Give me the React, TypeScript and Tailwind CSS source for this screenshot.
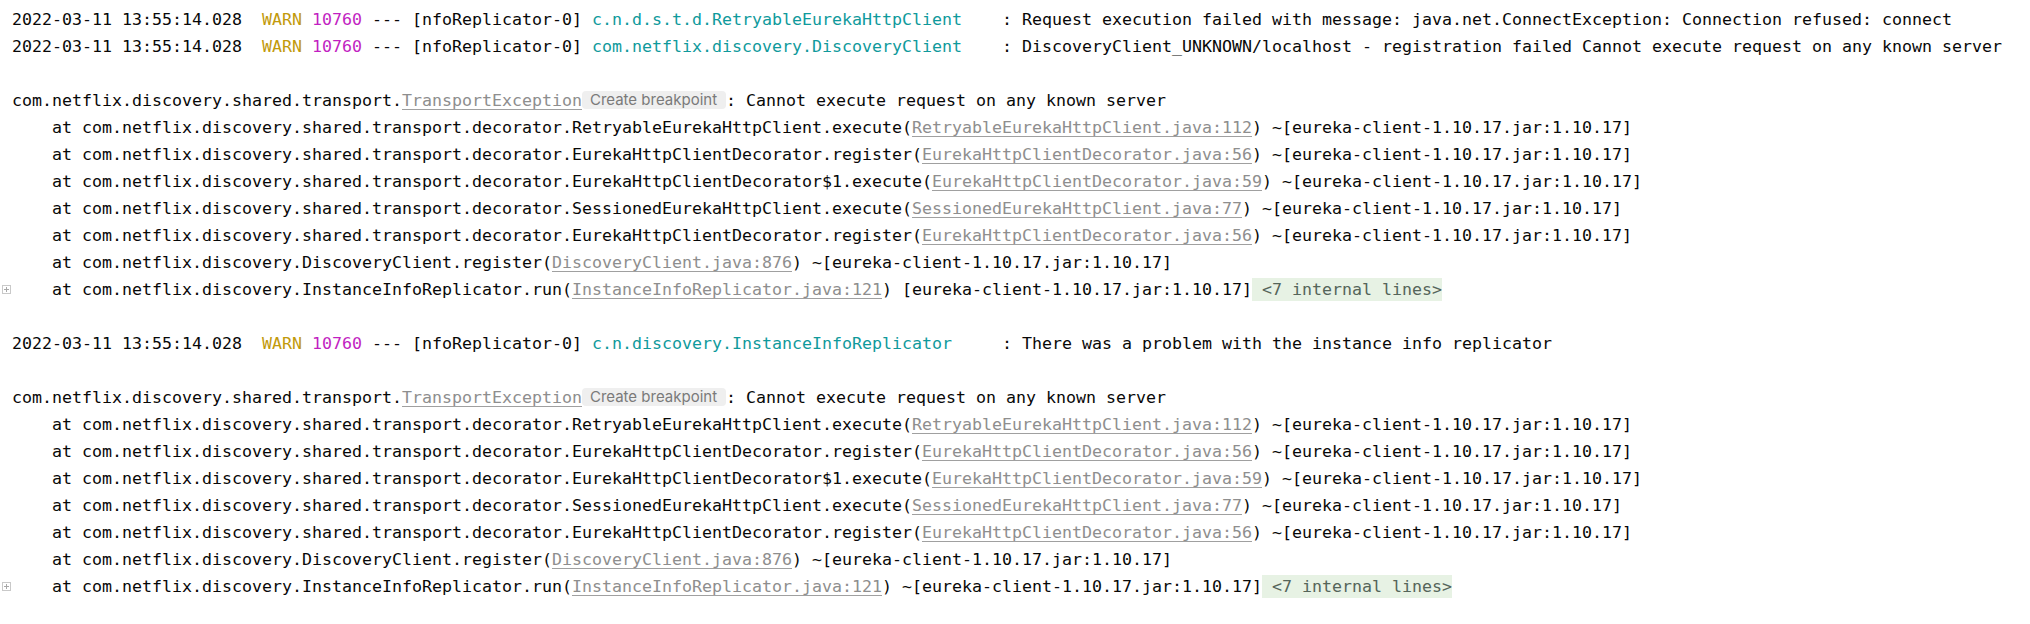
import React from "react";

const JAR = "[eureka-client-1.10.17.jar:1.10.17]";

function FoldIcon() {
  return (
    <svg width="9" height="9" viewBox="0 0 9 9" className="block">
      <rect x="0.5" y="0.5" width="8" height="8" fill="#ffffff" stroke="#c9c9c9" />
      <line x1="2" y1="4.5" x2="7" y2="4.5" stroke="#a8a8a8" />
      <line x1="4.5" y1="2" x2="4.5" y2="7" stroke="#a8a8a8" />
    </svg>
  );
}

function Row({ children, fold }: { children?: React.ReactNode; fold?: boolean }) {
  return (
    <div className="flex items-center h-[27px] whitespace-pre">
      <div className="w-[11px] h-[27px] flex items-center justify-start pl-[1px] shrink-0">
        {fold ? <FoldIcon /> : null}
      </div>
      {children}
    </div>
  );
}

function Link({ children }: { children: React.ReactNode }) {
  return (
    <span className="text-[#8e8e8e] underline decoration-[#a0a0a0] decoration-1 underline-offset-[3px]">
      {children}
    </span>
  );
}

function Header({ logger, msg }: { logger: string; msg: string }) {
  return (
    <Row>
      <span>2022-03-11 13:55:14.028  </span>
      <span className="text-[#c29a0c]">WARN</span>
      <span> </span>
      <span className="text-[#c21fc2]">10760</span>
      <span> --- [nfoReplicator-0] </span>
      <span className="text-[#0f9a9c]">{logger}</span>
      <span>{" : " + msg}</span>
    </Row>
  );
}

function Exception() {
  return (
    <Row>
      <span>com.netflix.discovery.shared.transport.</span>
      <Link>TransportException</Link>
      <span className="h-[18px] w-[144px] mb-[2px] rounded-[4px] bg-[#efefef] text-[#7a7a7a] flex items-center justify-center font-['Inter',sans-serif] text-[15px] leading-[18px] pr-[1px]">
        Create breakpoint
      </span>
      <span>: Cannot execute request on any known server</span>
    </Row>
  );
}

function Trace({
  pre,
  link,
  tilde = true,
  fold = false,
}: {
  pre: string;
  link: string;
  tilde?: boolean;
  fold?: boolean;
}) {
  return (
    <Row fold={fold}>
      <span>{"    at " + pre + "("}</span>
      <Link>{link}</Link>
      <span>{") " + (tilde ? "~" : "") + JAR}</span>
      {fold ? (
        <span className="h-[23px] flex items-center bg-[#e7f2e4] text-[#55655a]">{" <7 internal lines>"}</span>
      ) : null}
    </Row>
  );
}

function Stack({ lastTilde }: { lastTilde: boolean }) {
  const d = "com.netflix.discovery.shared.transport.decorator.";
  return (
    <>
      <Exception />
      <Trace pre={d + "RetryableEurekaHttpClient.execute"} link="RetryableEurekaHttpClient.java:112" />
      <Trace pre={d + "EurekaHttpClientDecorator.register"} link="EurekaHttpClientDecorator.java:56" />
      <Trace pre={d + "EurekaHttpClientDecorator$1.execute"} link="EurekaHttpClientDecorator.java:59" />
      <Trace pre={d + "SessionedEurekaHttpClient.execute"} link="SessionedEurekaHttpClient.java:77" />
      <Trace pre={d + "EurekaHttpClientDecorator.register"} link="EurekaHttpClientDecorator.java:56" />
      <Trace pre="com.netflix.discovery.DiscoveryClient.register" link="DiscoveryClient.java:876" />
      <Trace
        pre="com.netflix.discovery.InstanceInfoReplicator.run"
        link="InstanceInfoReplicator.java:121"
        tilde={lastTilde}
        fold
      />
    </>
  );
}

export default function App() {
  return (
    <div className="w-[2030px] h-[624px] bg-white overflow-hidden pt-[6px] pl-[1px] text-[#080808] font-['DejaVu_Sans_Mono',monospace] text-[16.61px] leading-[27px]">
      <Header
        logger="c.n.d.s.t.d.RetryableEurekaHttpClient   "
        msg="Request execution failed with message: java.net.ConnectException: Connection refused: connect"
      />
      <Header
        logger="com.netflix.discovery.DiscoveryClient   "
        msg="DiscoveryClient_UNKNOWN/localhost - registration failed Cannot execute request on any known server"
      />
      <Row />
      <Stack lastTilde={false} />
      <Row />
      <Header
        logger="c.n.discovery.InstanceInfoReplicator    "
        msg="There was a problem with the instance info replicator"
      />
      <Row />
      <Stack lastTilde={true} />
    </div>
  );
}
